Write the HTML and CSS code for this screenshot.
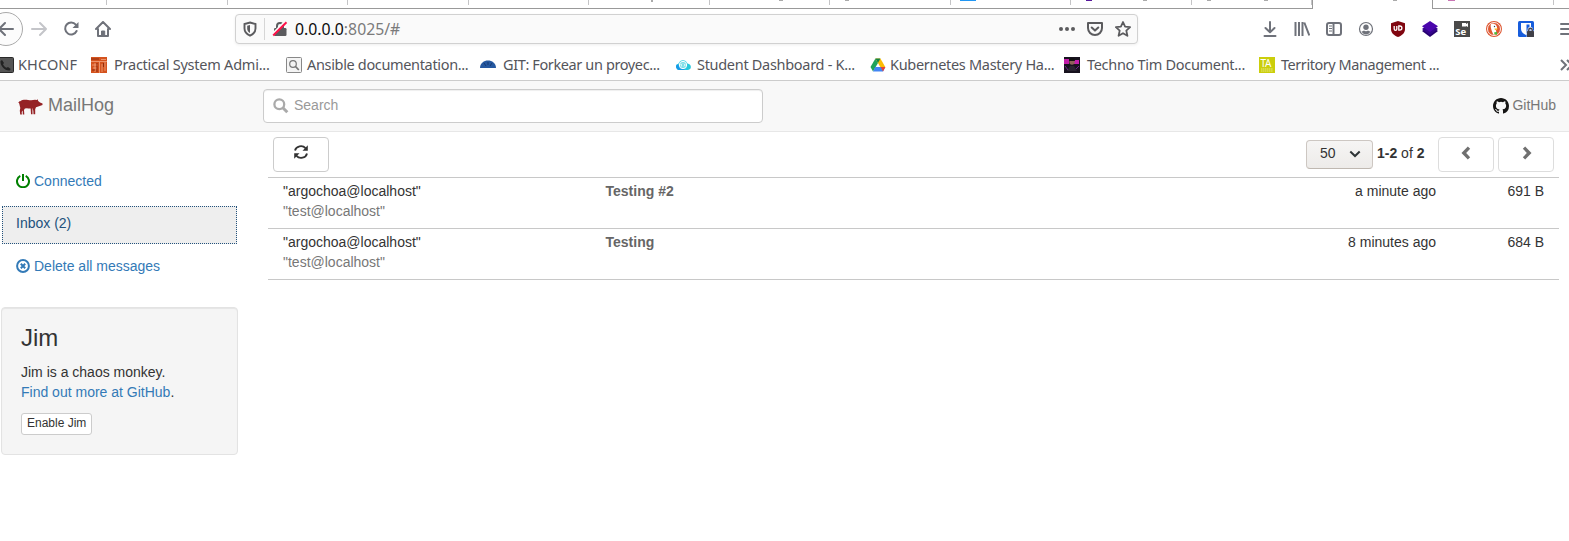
FILE: index.html
```html
<!DOCTYPE html>
<html lang="en">
<head>
<meta charset="utf-8">
<title>MailHog</title>
<link rel="stylesheet" href="styles.css">
</head>
<body>
<div class="tabs">
  <div class="tab t1"></div><div class="tab t2"></div><div class="tab t2"></div><div class="tab t2"></div><div class="tab t2"></div>
  <div class="tab t2"><i class="peek p1"></i></div><div class="tab t2"><i class="peek p2"></i></div><div class="tab t2"><i class="peek p3"></i></div>
  <div class="tab t2"><i class="peek blue"></i></div><div class="tab t2"><i class="peek purple"></i><i class="peek p4"></i></div><div class="tab t2"><i class="peek p5"></i><i class="peek p4"></i></div>
  <div class="tab active"><i class="peek p6"></i></div><div class="tab t2"><i class="peek pink"></i></div><div class="tab last"></div>
</div>
<div class="toolbar">
  <div class="nav">
    <div class="back"><svg width="16" height="16" viewBox="0 0 16 16" fill="none" stroke="#6f727a" stroke-width="2" stroke-linecap="round" stroke-linejoin="round"><path d="M1 8H15M7 2L1 8l6 6"/></svg></div>
    <svg class="fwd" width="16" height="16" viewBox="0 0 16 16" fill="none" stroke="#c4c5c9" stroke-width="2" stroke-linecap="round" stroke-linejoin="round"><path d="M1 8H15M9 2l6 6-6 6"/></svg>
    <svg class="reload" width="16" height="16" viewBox="0 0 16 16" fill="none" stroke="#6f727a" stroke-width="2" stroke-linecap="round"><path d="M12.800 3.700A6 6 0 1 0 13.600 10"/><path d="M15.500 1v6H9.500z" fill="#6f727a" stroke="none"/></svg>
    <svg class="home" width="16" height="16" viewBox="0 0 16 16" fill="none" stroke="#6f727a" stroke-width="2" stroke-linecap="round" stroke-linejoin="round"><path d="M1 8l7-7 7 7M3 8v7h10V8"/><path d="M6.500 15v-5h3.200v5" fill="#6f727a" stroke-width="1"/></svg>
  </div>
  <div class="url">
    <svg class="shield" width="14" height="16" viewBox="0 0 14 16"><path d="M7 1.500L12.500 3v4.500c0 3.500-2.500 5.800-5.500 7.100C4 13.300 1.500 11 1.500 7.500V3z" fill="none" stroke="#5b5b5e" stroke-width="1.900"/><path d="M7 4v8c-1.700-1-2.800-2.500-2.800-4.500V4.700z" fill="#5b5b5e"/></svg>
    <i class="sep"></i>
    <svg class="lock" width="16" height="16" viewBox="0 0 16 16"><path d="M5 8V5a3 3 0 0 1 6 0V8" fill="none" stroke="#5b5b5e" stroke-width="2"/><rect x="2" y="7" width="12.500" height="8" rx="1.200" fill="#5b5b5e"/><path d="M1 12.500L12.500 1" stroke="#fafafa" stroke-width="2"/><path d="M1.200 14.500L14.500 1.200" stroke="#ff1249" stroke-width="2"/></svg>
    <span class="addr">0.0.0.0<span>:8025/#</span></span>
    <div class="urlicons">
      <svg width="16" height="16" viewBox="0 0 16 16" fill="#5b5b5e"><circle cx="2" cy="8" r="2"/><circle cx="8" cy="8" r="2"/><circle cx="14" cy="8" r="2"/></svg>
      <svg width="16" height="16" viewBox="0 0 16 16" fill="none" stroke="#5b5b5e" stroke-width="2" stroke-linecap="round" stroke-linejoin="round"><path d="M1 2h14v5a7 7 0 0 1-14 0z"/><path d="M4.700 6.500L8 9.600l3.300-3.100"/></svg>
      <svg width="16" height="16" viewBox="0 0 16 16" fill="none" stroke="#5b5b5e" stroke-width="1.800" stroke-linejoin="round"><path d="M8 1l2.100 4.700 5 .5-3.800 3.400 1.100 5.200L8 12.200l-4.400 2.600 1.100-5.200L.9 6.200l5-.5z"/></svg>
    </div>
  </div>
  <div class="tools">
    <svg width="16" height="16" viewBox="0 0 16 16" fill="none" stroke="#6f727a" stroke-width="2" stroke-linecap="round" stroke-linejoin="round"><path d="M8 1v10M3.500 7L8 11.300 12.500 7M2.500 15h11"/></svg>
    <svg width="16" height="16" viewBox="0 0 16 16" fill="none" stroke="#6f727a" stroke-width="2"><path d="M1.500 1v14M5 1v14M8.500 1v14M10.300 1.500l5 13"/></svg>
    <svg width="16" height="16" viewBox="0 0 16 16" fill="none" stroke="#6f727a" stroke-width="2"><rect x="1" y="2" width="14" height="12" rx="2"/><path d="M7.500 2v12"/><path d="M3 5h3M3 7.500h3M3 10h3" stroke-width="1"/></svg>
    <svg width="16" height="16" viewBox="0 0 16 16"><circle cx="8" cy="8" r="6.500" fill="none" stroke="#6f727a" stroke-width="1.200"/><circle cx="8" cy="6.300" r="2.700" fill="#6f727a"/><path d="M3.500 10.500c2 0 1.500-1 2.500-1 1 1 3 1 4 0 1 0 .5 1 2.500 1-2 4-7 4-9 0z" fill="#6f727a"/></svg>
    <svg width="16" height="16" viewBox="0 0 16 16"><path d="M8 0l7 2.200V8c0 4-3 6.500-7 8-4-1.500-7-4-7-8V2.200z" fill="#800610"/><path d="M4.200 5v3a1.300 1.300 0 0 0 2.600 0V5M8.800 5h1a2 2 0 0 1 0 4.200h-1z" fill="none" stroke="#fff" stroke-width="1.300"/></svg>
    <svg width="16" height="16" viewBox="0 0 16 16"><path d="M8 4.500l8 5.500-8 6-8-6z" fill="#27006f"/><path d="M8 2l8 6-8 6-8-6z" fill="#34058c"/><path d="M8 0l8 5.200L8 11 0 5.200z" fill="#4a06ac"/></svg>
    <svg width="16" height="16" viewBox="0 0 16 16"><rect width="16" height="16" fill="#4a4a4a"/><path d="M8 2h4v1l2-1v4l-2-1v.5H8z" fill="#fff"/><text x="1.200" y="14" class="se">Se</text></svg>
    <svg width="16" height="16" viewBox="0 0 16 16"><circle cx="8" cy="8" r="8" fill="#de5833"/><circle cx="8" cy="8" r="6.500" fill="none" stroke="#fff" stroke-width=".9"/><path d="M5 3c4-1 6.500 1.500 6 5l-1 1 .5 4-3 .7C6 11 5 8 4.600 5z" fill="#fff"/><path d="M8.500 7.500h4l-3.500 1.700z" fill="#fdb813"/><path d="M8 11.500l3-.7v3l-2.500-.5z" fill="#4cba3c"/><circle cx="8.500" cy="5.500" r=".7" fill="#345"/></svg>
    <svg width="16" height="16" viewBox="0 0 16 16"><rect width="16" height="16" rx="1.500" fill="#175ddc"/><path d="M3 2h10v6c0 3-2.500 5-5 6-2.500-1-5-3-5-6z" fill="#fff"/><path d="M8.500 3.500h3V8c0 2-1.500 3.500-3 4.300z" fill="#175ddc"/><path d="M8.500 9.500h1V8.500a2.500 2.500 0 0 1 5.500 0v1h1V16H8.500z" fill="#b9c9ec"/><rect x="9" y="10" width="7" height="6" rx=".6" fill="#404048"/><path d="M10.700 10V9.200a1.800 1.800 0 0 1 3.600 0v.8" fill="none" stroke="#404048" stroke-width="1.300"/></svg>
  </div>
  <i class="menusep"></i>
  <svg class="menu" width="16" height="16" viewBox="0 0 16 16" stroke="#6f727a" stroke-width="2" stroke-linecap="round"><path d="M1 3h14M1 8h14M1 13h14"/></svg>
</div>
<div class="bookmarks">
  <div class="bm b1"><svg width="16" height="16" viewBox="0 0 16 16"><rect x=".5" y=".5" width="15" height="15" rx="1" fill="#555" stroke="#292929"/><path d="M4 3l2 3-1 1.300c1 2 2 3 3.500 3.500L10 10l2.700 2-1 1.500C7 14 2 9 2.500 4z" fill="#222"/></svg><span>KHCONF</span></div>
  <div class="bm b2"><svg width="16" height="16" viewBox="0 0 16 16"><rect width="16" height="16" fill="#d4531e"/><path d="M0 4.500h16M1 8h6M2 11h4M8.500 5v11M11 7v8M14 5v9M4 6v9M10 2.500h5" stroke="#f6b08e" stroke-width=".7"/><path d="M0 2h8M6 6v9M12.500 6v4M1 13h3" stroke="#8f2b0d"/></svg><span>Practical System Admi...</span></div>
  <div class="bm b3"><svg width="16" height="16" viewBox="0 0 16 16"><rect x=".5" y=".5" width="15" height="15" rx="1" fill="#f4f4f4" stroke="#888"/><circle cx="7" cy="7" r="3.300" fill="none" stroke="#777" stroke-width="1.200"/><path d="M9.500 9.500l3.300 3.500" stroke="#777" stroke-width="1.800"/></svg><span>Ansible documentation...</span></div>
  <div class="bm b4"><svg width="16" height="16" viewBox="0 0 16 16"><path d="M0 11C0 1 16 1 16 11z" fill="#2558a0"/><path d="M4 6l2 3M8 5v3M12 6l-2 3" stroke="#163a73"/></svg><span>GIT: Forkear un proyec...</span></div>
  <div class="bm b5"><svg width="16" height="16" viewBox="0 0 16 16"><path d="M4 13a3.500 3.500 0 0 1-.5-6.500C5 2 11 2 12.500 6.500 17 7 17 13 12.500 13z" fill="#28c8dc"/><path d="M4 13a3.500 3.500 0 0 1-2-6L10 13z" fill="#149be8"/><circle cx="8" cy="8" r="3.700" fill="#7fdfe8" stroke="#fff" stroke-width="1"/><path d="M7 6.700L5.700 8 7 9.300M9 6.700L10.300 8 9 9.300" fill="none" stroke="#fff" stroke-width=".9"/></svg><span>Student Dashboard - K...</span></div>
  <div class="bm b6"><svg width="16" height="16" viewBox="0 0 16 16"><path d="M5.400 1.500L8 6 3 14.500.5 10z" fill="#20a35a"/><path d="M5.400 1.500h5L15.300 10h-5z" fill="#fbbc04"/><path d="M5.400 1.500h5L8 6z" fill="#168245"/><path d="M5.200 10h10.200L13 14.500H3z" fill="#4285f4"/><path d="M10.700 10h4.700L13 14.500z" fill="#ea4335"/></svg><span>Kubernetes Mastery Ha...</span></div>
  <div class="bm b7"><svg width="16" height="16" viewBox="0 0 16 16"><rect width="16" height="16" fill="#17121e"/><path d="M0 2h5v5H0zM10 3h5v4h-5z" fill="#c21ca9"/><circle cx="8" cy="5" r="2.700" fill="#8e6259"/><path d="M5 4c0-4 6-4 6 0z" fill="#111"/><path d="M3 14l3-5h4l3 5z" fill="#292431"/><path d="M1 9l3 4M12 12l3-3" stroke="#6d278b"/></svg><span>Techno Tim Document...</span></div>
  <div class="bm b8"><svg width="16" height="16" viewBox="0 0 16 16"><rect width="16" height="16" fill="#cbce0b"/><text x="1.500" y="10" class="ta">TA</text><path d="M2 12h12M2 14h12" stroke="#eef09a" stroke-width=".8" stroke-dasharray="1.500 .4"/></svg><span>Territory Management ...</span></div>
  <svg class="more" width="12" height="14" viewBox="0 0 12 14" fill="none" stroke="#6f727a" stroke-width="2"><path d="M1 2l5 5-5 5M7 2l5 5-5 5"/></svg>
</div>
<header class="navbar">
  <div class="brand">
    <svg width="25" height="17" viewBox="0 0 25 17"><path d="M1.200 5.500C.5 4 1 2.800 2.200 3.300 4 1.800 7 1.500 10 2c3 .4 5 .2 7-.2l1.700.2 1-.7.5 1.700 1.800 1.500 2.500 1V7L21 8.300l-3 1-.8 2v5h-1.700l-.2-3.500-.9-2.500c-2 .5-4 .3-5.500-.1l-2 .3-.9 1.500.3 4.500H4.800l-.1-4-1 1.500.2 2.500H2.200l-.4-4 .5-2.500z" fill="#952225"/><path d="M12.600 10l.4 6.300h1.500l-.1-6.300" fill="#952225"/><path d="M1.500 5L.7 4" stroke="#952225" fill="none"/></svg>
    <span>MailHog</span>
  </div>
  <div class="search"><svg width="16" height="16" viewBox="0 0 16 16" fill="none" stroke="#aaa" stroke-width="2.300"><circle cx="6.300" cy="6.300" r="4.900"/><path d="M9.800 9.800l4.500 4.500" stroke-width="3"/></svg><span>Search</span></div>
  <div class="github"><svg width="16" height="16" viewBox="0 0 16 16"><path fill="#161514" d="M8 0C3.580 0 0 3.580 0 8c0 3.540 2.290 6.530 5.470 7.590.4.070.55-.17.55-.38 0-.19-.01-.82-.01-1.490-2.010.37-2.530-.49-2.690-.94-.09-.23-.48-.94-.82-1.130-.28-.15-.68-.52-.01-.53.63-.01 1.080.58 1.230.82.72 1.210 1.870.87 2.330.66.07-.52.28-.87.51-1.070-1.780-.2-3.640-.89-3.640-3.950 0-.87.31-1.590.82-2.150-.08-.2-.36-1.020.08-2.120 0 0 .67-.21 2.200.82a7.600 7.600 0 0 1 4 0c1.530-1.040 2.200-.82 2.200-.82.44 1.100.16 1.920.08 2.120.51.56.82 1.270.82 2.150 0 3.070-1.870 3.750-3.650 3.950.29.25.54.73.54 1.480 0 1.070-.01 1.930-.01 2.200 0 .21.15.46.55.38A8 8 0 0 0 16 8c0-4.420-3.580-8-8-8z"/></svg><span>GitHub</span></div>
</header>
<main class="page">
  <aside class="side">
    <a class="item conn"><svg width="14" height="14" viewBox="0 0 14 14" fill="none" stroke="green" stroke-width="2"><path d="M4.300 1.900a6 6 0 1 0 5.400 0M7 0v7"/></svg><span>Connected</span></a>
    <a class="item inbox">Inbox (2)</a>
    <a class="item del"><svg width="14" height="14" viewBox="0 0 14 14" fill="none" stroke="#337ab7" stroke-width="2"><circle cx="7" cy="7" r="5.900"/><path d="M4.800 4.800l4.400 4.400M9.200 4.800L4.800 9.200"/></svg><span>Delete all messages</span></a>
    <section class="well">
      <h3>Jim</h3>
      <p>Jim is a chaos monkey.<br><a>Find out more at GitHub</a>.</p>
      <button>Enable Jim</button>
    </section>
  </aside>
  <section class="content">
    <div class="actions">
      <div class="btn refresh"><svg width="14" height="14" viewBox="0 0 14 14" fill="none" stroke="#333" stroke-width="1.800"><path d="M1 5.500C2 1 8.500-.3 11.500 3.200M13 8.500c-1 4.500-7.500 5.800-10.500 2.300"/><path d="M13.800.3v5.400H8.500zM.2 13.700V8.300h5.300z" fill="#333" stroke="none"/></svg></div>
      <div class="pager">
        <div class="select"><span>50</span><svg width="12" height="8" viewBox="0 0 12 8" fill="none" stroke="#2e3436" stroke-width="2"><path d="M1.300 1.500L6 6l4.700-4.500"/></svg></div>
        <span class="count"><b>1-2</b> of <b>2</b></span>
        <div class="btn dim prev"><svg width="10" height="14" viewBox="0 0 10 14" fill="none" stroke="#707070" stroke-width="3.300"><path d="M8 1.700L2.800 7 8 12.300"/></svg></div>
        <div class="btn dim next"><svg width="10" height="14" viewBox="0 0 10 14" fill="none" stroke="#707070" stroke-width="3.300"><path d="M2 1.700L7.200 7 2 12.300"/></svg></div>
      </div>
    </div>
    <div class="messages">
      <div class="row"><div class="from">"argochoa@localhost"<br><span>"test@localhost"</span></div><b class="subject">Testing #2</b><div class="time">a minute ago</div><div class="size">691 B</div></div>
      <div class="row"><div class="from">"argochoa@localhost"<br><span>"test@localhost"</span></div><b class="subject">Testing</b><div class="time">8 minutes ago</div><div class="size">684 B</div></div>
    </div>
  </section>
</main>
</body>
</html>
```

FILE: styles.css
```css
* { box-sizing: border-box; }
body { margin: 0; width: 1569px; height: 541px; overflow: hidden; background: #fff; color: #333; font: 14px/20px "Liberation Sans", Arial, sans-serif; }
svg { display: block; flex: none; }
.tabs { display: flex; height: 9px; overflow: hidden; }
.tab { position: relative; flex: none; height: 9px; border-bottom: 1px solid #999; }
.tab::after { content: ""; position: absolute; right: 0; top: 0; width: 1px; height: 5px; background: #c4c4c6; }
.t1 { width: 107px; }
.t2 { width: 120.5px; }
.active { width: 121px; border: solid #999; border-width: 0 1px; }
.active::after { display: none; }
.last { flex: 1; }
.last::after { display: none; }
.peek { position: absolute; top: 0; height: 1px; width: 4px; background: #aaa; }
.p1 { left: 62px; width: 2px; height: 2px; }
.p2 { left: 69px; }
.p3 { left: 15px; }
.p4 { left: 72px; }
.p5 { left: 15px; }
.p6 { left: 80px; }
.blue { left: 9px; width: 12px; background: #2196f3; width: 16px; }
.purple { left: 15px; width: 6px; background: #58199c; }
.pink { left: 15px; width: 7px; background: #c875b4; }
.toolbar { display: flex; align-items: center; height: 41px; padding-bottom: 1px; }
.nav { display: flex; align-items: center; width: 235px; flex: none; }
.back { width: 34px; height: 34px; margin-left: -11px; border: 1px solid #aaa; border-radius: 50%; background: #fcfcfc; display: flex; align-items: center; justify-content: center; flex: none; }
.fwd { margin-left: 8px; }
.reload { margin-left: 16px; }
.home { margin-left: 16px; }
.url { display: flex; align-items: center; flex: none; width: 903px; height: 30px; border: 1px solid #d1d1d1; border-radius: 4px; background: #fafafa; box-shadow: 0 1px 3px #0001; }
.shield { margin-left: 7px; }
.sep { width: 1px; height: 22px; margin: 0 7px; background: #d6d6d6; }
.addr { margin-left: 7px; color: #0c0c0d; font: 15.8px/20px "Noto Sans", sans-serif; }
.addr span { color: #7b7b7b; }
.urlicons { display: flex; gap: 12px; margin: 0 6px 0 auto; }
.tools { display: flex; gap: 16px; margin-left: 124px; }
.menusep { width: 1px; height: 34px; margin-left: 11px; background: #ddd; }
.menu { margin-left: 15px; }
.se { font: bold 9.5px "Noto Sans", sans-serif; fill: #fff; }
.ta { font: 10px "Noto Sans", sans-serif; fill: #fff; }
.bookmarks { display: flex; height: 31px; align-items: center; padding-bottom: 1px; border-bottom: 1px solid #ccc; overflow: hidden; color: #54555b; font: 14.5px/20px "Noto Sans", sans-serif; }
.bm { display: flex; align-items: center; flex: none; gap: 5px; white-space: nowrap; letter-spacing: -.3px; }
.bm span { margin-top: -1px; }
.b1 { margin-left: -2px; width: 93px; gap: 4px; letter-spacing: .1px; }
.b2 { width: 195px; gap: 7px; letter-spacing: -.24px; }
.b3 { width: 194px; letter-spacing: -.34px; }
.b4 { width: 195px; gap: 7px; letter-spacing: -.38px; }
.b5 { width: 195px; gap: 6px; }
.b6 { width: 194px; gap: 4px; }
.b7 { width: 195px; gap: 7px; }
.b8 { width: 194px; gap: 6px; letter-spacing: -.45px; }
.more { margin-left: 107px; }
.navbar { display: flex; height: 51px; background: #f8f8f8; border-bottom: 1px solid #e7e7e7; color: #777; align-items: center; }
.brand { display: flex; align-items: center; width: 263px; padding-left: 18px; gap: 5px; font-size: 18px; flex: none; }
.brand span, .search span, .github span { margin-top: -2px; }
.search { width: 500px; height: 34px; display: flex; align-items: center; gap: 5px; padding-left: 9px; border: 1px solid #ccc; border-radius: 4px; background: #fff; box-shadow: inset 0 1px 1px #0001; color: #999; }
.github { display: flex; align-items: center; gap: 3px; margin: 0 13px 0 auto; }
.page { display: flex; }
.side { width: 268px; flex: none; padding: 29px 0 0 1px; }
.item { display: flex; align-items: center; width: 237px; height: 40px; padding: 0 15px; gap: 4px; color: #337ab7; }
.conn svg, .del svg { margin-top: -1px; }
.inbox { width: 235px; height: 38px; margin: 5px 0 2px 1px; background: #eee; color: #23527c; border: 1px dotted #23527c; padding: 0 13px 4px; }
.well { width: 237px; height: 148px; margin-top: 21px; padding: 17px 19px; border: 1px solid #e3e3e3; border-radius: 4px; background: #f5f5f5; box-shadow: inset 0 1px 1px #0001; }
.well h3 { margin: 0 0 11px; font-size: 24px; line-height: 26px; font-weight: 400; }
.well p { margin: 0 0 11px; }
.well a { color: #337ab7; }
.well button { display: block; height: 22px; padding: 0 5px 2px; font: 12px/18px "Liberation Sans", sans-serif; color: #333; background: #fff; border: 1px solid #ccc; border-radius: 3px; }
.content { width: 1291px; flex: none; padding-top: 5px; }
.actions { display: flex; justify-content: space-between; height: 40px; padding: 0 5px; }
.btn { width: 56px; height: 35px; display: flex; justify-content: center; padding-top: 8px; border: 1px solid #ccc; border-radius: 4px; }
.refresh { padding-top: 7px; }
.dim { border-color: #ddd; }
.prev { padding-right: 1px; }
.next { padding-left: 2px; }
.pager { display: flex; gap: 4px; }
.select { display: flex; align-items: center; justify-content: space-between; width: 67px; height: 29px; margin-top: 3px; padding: 0 11px 2px 13px; border: 1px solid #cdc7c2; border-bottom-color: #bfb8b1; border-radius: 4px; background: linear-gradient(#f6f5f4, #edebe9); }
.select span { margin-top: -1px; }
.count { width: 57px; margin: 6px 0 0; white-space: nowrap; }
.messages { border-bottom: 1px solid #c8c8c8; }
.row { display: grid; grid-template-columns: 322.500px 1fr 300px 108px; height: 51px; padding: 3px 15px 0; border-top: 1px solid #c8c8c8; }
.from span { color: #777; }
.subject { color: #666; }
.time, .size { text-align: right; }
```
